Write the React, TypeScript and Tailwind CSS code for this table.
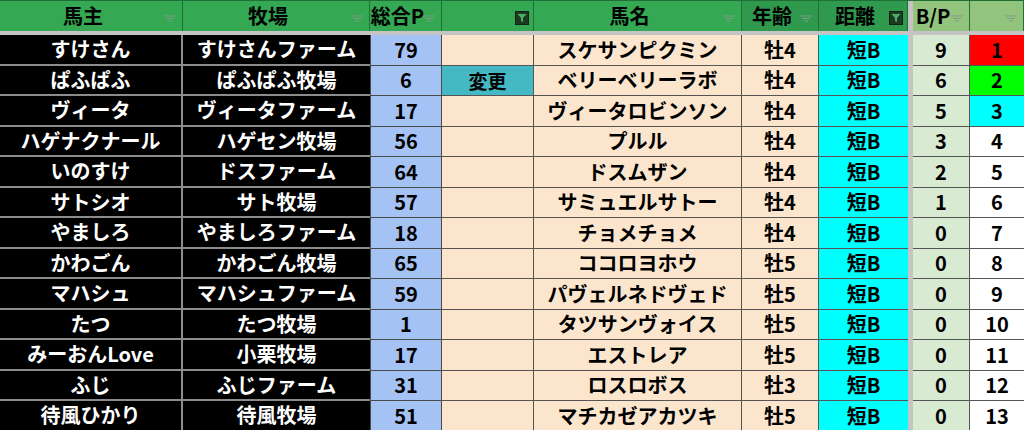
const rows: [string, string, string, string, string, string, string, string][] = [
  ["すけさん", "すけさんファーム", "79", "", "スケサンピクミン", "牡4", "9", "1"],
  ["ぱふぱふ", "ぱふぱふ牧場", "6", "変更", "ベリーベリーラボ", "牡4", "6", "2"],
  ["ヴィータ", "ヴィータファーム", "17", "", "ヴィータロビンソン", "牡4", "5", "3"],
  ["ハゲナクナール", "ハゲセン牧場", "56", "", "プルル", "牡4", "3", "4"],
  ["いのすけ", "ドスファーム", "64", "", "ドスムザン", "牡4", "2", "5"],
  ["サトシオ", "サト牧場", "57", "", "サミュエルサトー", "牡4", "1", "6"],
  ["やましろ", "やましろファーム", "18", "", "チョメチョメ", "牡4", "0", "7"],
  ["かわごん", "かわごん牧場", "65", "", "ココロヨホウ", "牡5", "0", "8"],
  ["マハシュ", "マハシュファーム", "59", "", "パヴェルネドヴェド", "牡5", "0", "9"],
  ["たつ", "たつ牧場", "1", "", "タツサンヴォイス", "牡5", "0", "10"],
  ["みーおんLove", "小栗牧場", "17", "", "エストレア", "牡5", "0", "11"],
  ["ふじ", "ふじファーム", "31", "", "ロスロボス", "牡3", "0", "12"],
  ["待風ひかり", "待風牧場", "51", "", "マチカゼアカツキ", "牡5", "0", "13"],
]

const cols = "grid grid-cols-[183px_187px_72px_92px_208px_77px_89px_5px_57px_54px]"

function FilterIcon() {
  return (
    <svg width="12" height="8" viewBox="0 0 12 8" className="absolute right-1.5 bottom-2">
      <path d="M0 1h12M2 3.5h8M4 6h4" stroke="#7f9c86" strokeWidth="1.2" />
    </svg>
  )
}

function ActiveFilter() {
  return (
    <div className="absolute right-1 bottom-1.5 w-[14px] h-[14px] bg-[#1c3a22] border border-[#0e2312] flex items-center justify-center">
      <svg width="10" height="10" viewBox="0 0 10 10">
        <path d="M0.5 1h9L6 5v4L4 8V5z" fill="#4fae63" />
      </svg>
    </div>
  )
}

function Head({ label, active, light, dark }: { label: string; active?: boolean; light?: boolean; dark?: boolean }) {
  const bg = light ? "bg-[#93c47d]" : dark ? "bg-[#2f9a4e]" : "bg-[#34a853]"
  return (
    <div className={`relative h-[30px] ${bg} border-r border-[#1f6f36] flex items-center justify-center pr-4 text-[20px] font-bold text-black`}>
      <span className="whitespace-nowrap">{label}</span>
      {active ? <ActiveFilter /> : <FilterIcon />}
    </div>
  )
}

function rankBg(r: string) {
  if (r === "1") return "bg-[#ff0000]"
  if (r === "2") return "bg-[#00ff00]"
  if (r === "3") return "bg-[#00ffff]"
  return "bg-white"
}

export default function App() {
  return (
    <div
      className="w-[1024px] h-[430px] overflow-hidden bg-[#c4c4c4]"
      style={{ fontFamily: '"Noto Sans CJK JP", "Noto Sans", sans-serif' }}
    >
      <div className={`${cols} border-t border-[#1f6f36]`}>
        <Head label="馬主" />
        <Head label="牧場" />
        <Head label="総合P" />
        <Head label="" active />
        <Head label="馬名" />
        <Head label="年齢" dark />
        <Head label="距離" dark active />
        <div className="bg-[#c4c4c4]" />
        <Head label="B/P" light />
        <Head label="" light />
      </div>
      <div className="h-[4px] bg-[#c4c4c4]" />
      {rows.map((r, i) => (
        <div key={i} className={`${cols} h-[30.5px] text-[20px] font-bold leading-none`}>
          <div className="bg-black text-white border-r-2 border-b-2 border-[#8c8c8c] flex items-center justify-center whitespace-nowrap">{r[0]}</div>
          <div className="bg-black text-white border-b-2 border-[#8c8c8c] flex items-center justify-center whitespace-nowrap">{r[1]}</div>
          <div className="bg-[#a4c2f4] text-black border-l border-r border-b border-[#4a4a4a] flex items-center justify-center">{r[2]}</div>
          <div className={`${r[3] ? "bg-[#45b9c3]" : "bg-[#fce5cd]"} text-black border-r border-b border-[#555] flex items-center justify-center text-[19px]`}>{r[3]}</div>
          <div className="bg-[#fce5cd] text-black border-r border-b border-[#555] flex items-center justify-center whitespace-nowrap">{r[4]}</div>
          <div className="bg-[#fce5cd] text-black border-r border-b border-[#555] flex items-center justify-center">{r[5]}</div>
          <div className="bg-[#00ffff] text-black border-b border-[#555] flex items-center justify-center">短B</div>
          <div className="bg-[#c4c4c4]" />
          <div className="bg-[#d9ead3] text-black border-r border-b border-[#555] flex items-center justify-center">{r[6]}</div>
          <div className={`${rankBg(r[7])} text-black border-b border-[#555] flex items-center justify-center`}>{r[7]}</div>
        </div>
      ))}
    </div>
  )
}
